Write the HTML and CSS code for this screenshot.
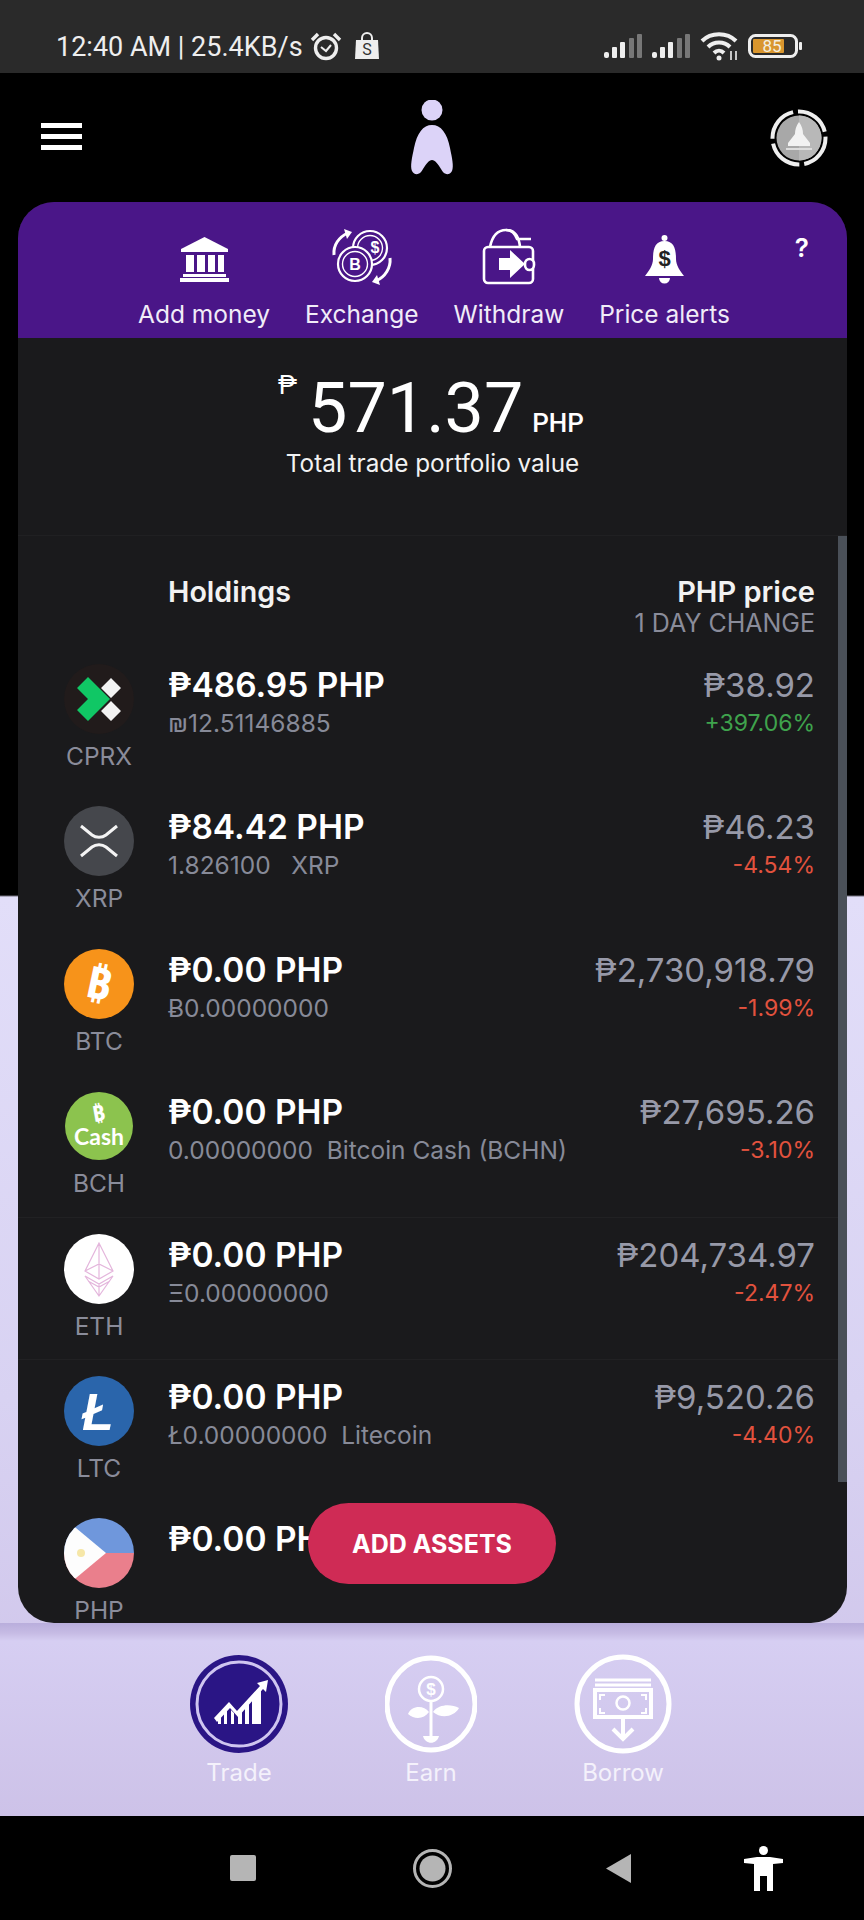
FILE: index.html
```html
<!DOCTYPE html>
<html lang="en">
<head>
<meta charset="utf-8">
<title>Trade</title>
<link rel="stylesheet" href="styles.css">
</head>
<body>
<div class="phone">
  <div class="status">
    <span class="status-text">12:40 AM | 25.4KB/s</span>
    <svg class="st-alarm" width="32" height="30" viewBox="0 0 32 30" fill="none" stroke="#eee"><circle cx="16" cy="17" r="10.5" stroke-width="3.4"/><path d="M11 16l5 4 5-6" stroke-width="2"/><path d="M2 9l6-6M30 9l-6-6" stroke-width="3.4"/></svg>
    <svg class="st-bag" width="26" height="27" viewBox="0 0 26 27"><path d="M8 9V6a5 5 0 0 1 10 0v3" fill="none" stroke="#eee" stroke-width="2"/><path d="M2 8h22l1 19H1z" fill="#eee"/><text x="13" y="23" class="bag-s">S</text></svg>
    <div class="status-right">
      <svg width="39" height="24" viewBox="0 0 39 24"><g fill="#eee"><rect x="0" y="18" width="5" height="6" rx="2"/><rect x="8" y="13" width="5" height="11" rx="1"/><rect x="16" y="8" width="5" height="16" rx="1"/></g><g fill="#777"><rect x="25" y="4" width="5" height="20" rx="1"/><rect x="33" y="0" width="5" height="24" rx="1"/></g></svg>
      <svg width="39" height="24" viewBox="0 0 39 24"><g fill="#eee"><rect x="0" y="18" width="5" height="6" rx="2"/><rect x="8" y="13" width="5" height="11" rx="1"/><rect x="16" y="8" width="5" height="16" rx="1"/></g><g fill="#777"><rect x="25" y="4" width="5" height="20" rx="1"/><rect x="33" y="0" width="5" height="24" rx="1"/></g></svg>
      <svg class="st-wifi" width="39" height="30" viewBox="0 0 39 30" fill="none" stroke="#eee" stroke-width="4"><path d="M2 10C11 1 27 1 36 10"/><path d="M8 16c6-6 16-6 22 0"/><path d="M14 22c3-3 7-3 10 0"/><circle cx="19" cy="27" r="2.5" fill="#eee" stroke="none"/><path d="M31 20v9M36 20v9" stroke-width="1.6"/></svg>
      <svg width="55" height="24" viewBox="0 0 55 24"><rect x="1.5" y="1.5" width="47" height="21" rx="6" fill="#2a2a2a" stroke="#eee" stroke-width="3"/><rect x="5" y="5" width="31" height="14" rx="1" fill="#d9962e"/><rect x="51" y="8" width="3" height="8" rx="1" fill="#eee"/><text x="24" y="18" class="batt">85</text></svg>
    </div>
  </div>

  <header class="topbar">
    <div class="burger"><i></i><i></i><i></i></div>
    <svg class="logo" width="44" height="76" viewBox="0 0 44 76" fill="#dcd3f8"><ellipse cx="22" cy="10" rx="10.500" ry="10.500"/><path d="M22 25C13 25 7 33 4 48 2 58 0 66 2 71c3 5 8 4 11-2 3-5 6-9 9-9s6 4 9 9c3 6 8 7 11 2 2-5 0-13-2-23-3-15-9-23-18-23z"/></svg>
    <svg class="avatar" width="58" height="58" viewBox="0 0 58 58"><circle cx="29" cy="29" r="22.500" fill="#a8a8a8"/><path d="M29 6.500a22.500 22.500 0 0 1 0 45z" fill="#b8b8b8"/><circle cx="29" cy="29" r="26.500" fill="none" stroke="#eee" stroke-width="4" stroke-dasharray="36 5"/><path d="M29 13c3 4 4 8 4 12l7 9v3H18v-3l7-9c0-4 1-8 4-12z" fill="#f2f2f2"/><rect x="16" y="39" width="26" height="2" fill="#ddd"/></svg>
  </header>

  <main class="card">
    <section class="actions">
      <div class="action">
        <svg width="49" height="58" viewBox="0 -9 49 58" fill="#fff"><path d="M24.500 0L48 12v3H1v-3z"/><path d="M6 18h8v17H6zM17 18h8v17h-8zM28 18h7v17h-7zM38 18h6v17h-6z"/><path d="M3 37h43v3H3zM0 41h49v4H0z"/></svg>
        <span>Add money</span>
      </div>
      <div class="action">
        <svg width="62" height="58" viewBox="0 0 62 58" fill="none" stroke="#fff" stroke-width="2.200"><circle cx="39" cy="20" r="17"/><circle cx="39" cy="20" r="12.500" stroke-width="1.400"/><circle cx="24" cy="36" r="17" fill="#4a1688"/><circle cx="24" cy="36" r="12.500" stroke-width="1.400"/><text x="24" y="42" class="coin">B</text><text x="44" y="25" class="coin">$</text><path d="M3 27C2 17 8 9 17 5" stroke-width="3"/><path d="M13 1l8 3-5 7z" fill="#fff" stroke="none"/><path d="M59 30c1 10-5 19-14 23" stroke-width="3"/><path d="M49 57l-8-3 5-7z" fill="#fff" stroke="none"/></svg>
        <span>Exchange</span>
      </div>
      <div class="action">
        <svg width="54" height="58" viewBox="0 -1 54 58" fill="none" stroke="#fff" stroke-width="2.600"><rect x="2" y="18" width="49" height="36" rx="4"/><path d="M8 18C10 8 15 1 24 1c9 0 13 7 14 17"/><path d="M24 1c7 0 9 5 11 9h14" /><path d="M17 30h11v-8l15 14-15 14v-8H17z" fill="#fff" stroke="none" transform="translate(0 -1)"/><rect x="43" y="30" width="9" height="11" rx="5" fill="#4a1688"/></svg>
        <span>Withdraw</span>
      </div>
      <div class="action">
        <svg width="39" height="58" viewBox="0 -7 39 58" fill="#fff"><circle cx="19.500" cy="3" r="3"/><path d="M19.500 6C29 6 31 14 31 24c0 6 4 12 8 17H0c4-5 8-11 8-17C8 14 10 6 19.500 6z"/><path d="M14 43h11a5.500 5.500 0 0 1-11 0z"/><text x="19.500" y="31" class="bell">$</text></svg>
        <span>Price alerts</span>
      </div>
      <span class="help">?</span>
    </section>

    <section class="summary">
      <div class="total"><span class="total-sym">₱</span><span class="total-num">571.37</span><span class="total-cur">PHP</span></div>
      <p class="total-label">Total trade portfolio value</p>
    </section>

    <section class="holdings">
      <div class="list-head">
        <span class="lh-left">Holdings</span>
        <div class="lh-right"><b>PHP price</b><span>1 DAY CHANGE</span></div>
      </div>

      <div class="row">
        <div class="coin-col">
          <svg class="ico" viewBox="0 0 70 70"><circle cx="35" cy="35" r="35" fill="#211b1b"/><path d="M13 24l11-11 22 22-22 22-11-11 11-11z" fill="#10c765"/><path d="M47 14l10 10-10 10-10-10zM47 37l10 10-10 10-10-10z" fill="#f2f2f2"/></svg>
          <span>CPRX</span>
        </div>
        <div class="hold"><b>₱486.95 PHP</b><span>₪12.51146885</span></div>
        <div class="price"><b>₱38.92</b><span class="up">+397.06%</span></div>
      </div>

      <div class="row">
        <div class="coin-col">
          <svg class="ico" viewBox="0 0 70 70"><circle cx="35" cy="35" r="35" fill="#45474c"/><path d="M17 20l11 9c4 3 10 3 14 0l11-9M17 50l11-9c4-3 10-3 14 0l11 9" fill="none" stroke="#f4f4f4" stroke-width="3"/></svg>
          <span>XRP</span>
        </div>
        <div class="hold"><b>₱84.42 PHP</b><span>1.826100 &nbsp; XRP</span></div>
        <div class="price"><b>₱46.23</b><span class="down">-4.54%</span></div>
      </div>

      <div class="row">
        <div class="coin-col">
          <svg class="ico" viewBox="0 0 70 70"><circle cx="35" cy="35" r="35" fill="#f7931a"/><text x="35" y="50" class="btc" transform="rotate(12 35 35)">₿</text></svg>
          <span>BTC</span>
        </div>
        <div class="hold"><b>₱0.00 PHP</b><span>Ƀ0.00000000</span></div>
        <div class="price"><b>₱2,730,918.79</b><span class="down">-1.99%</span></div>
      </div>

      <div class="row">
        <div class="coin-col">
          <svg class="ico" viewBox="0 0 70 70"><circle cx="35" cy="35" r="34" fill="#8cc34e"/><text x="35" y="30" class="bch-b" transform="rotate(-10 35 25)">₿</text><text x="35" y="54" class="bch-c">Cash</text></svg>
          <span>BCH</span>
        </div>
        <div class="hold"><b>₱0.00 PHP</b><span>0.00000000 &nbsp;Bitcoin Cash (BCHN)</span></div>
        <div class="price"><b>₱27,695.26</b><span class="down">-3.10%</span></div>
      </div>

      <div class="row row-line">
        <div class="coin-col">
          <svg class="ico" viewBox="0 0 70 70"><circle cx="35" cy="35" r="35" fill="#fff"/><g fill="none" stroke="#e4b6dc" stroke-width="1.200"><path d="M35 9L21 37l14 8 14-8zM35 9v36M21 37l14-7 14 7M21 42l14 20 14-20-14 8zM24 47l11 6 11-6M35 50v12"/></g></svg>
          <span>ETH</span>
        </div>
        <div class="hold"><b>₱0.00 PHP</b><span>Ξ0.00000000</span></div>
        <div class="price"><b>₱204,734.97</b><span class="down">-2.47%</span></div>
      </div>

      <div class="row row-line">
        <div class="coin-col">
          <svg class="ico" viewBox="0 0 70 70"><circle cx="35" cy="35" r="35" fill="#2a65ab"/><text x="34" y="54" class="ltc">Ł</text></svg>
          <span>LTC</span>
        </div>
        <div class="hold"><b>₱0.00 PHP</b><span>Ł0.00000000 &nbsp;Litecoin</span></div>
        <div class="price"><b>₱9,520.26</b><span class="down">-4.40%</span></div>
      </div>

      <div class="row">
        <div class="coin-col">
          <svg class="ico" viewBox="0 0 70 70"><defs><clipPath id="flag"><circle cx="35" cy="35" r="35"/></clipPath></defs><g clip-path="url(#flag)"><rect width="70" height="35" fill="#6f97dc"/><rect y="35" width="70" height="35" fill="#ea7f8c"/><path d="M0 0l42 35L0 70z" fill="#fdfdfd"/><circle cx="17" cy="35" r="4" fill="#f6e7a8"/></g></svg>
          <span>PHP</span>
        </div>
        <div class="hold"><b>₱0.00 PHP</b></div>
      </div>

      <div class="scrollbar"></div>
      <button class="fab" type="button">ADD ASSETS</button>
    </section>
  </main>

  <nav class="tabs">
    <div class="tab">
      <svg width="98" height="100" viewBox="0 0 98 100"><circle cx="49" cy="50" r="49" fill="#2a1585"/><circle cx="49" cy="50" r="42" fill="none" stroke="#cfc5f0" stroke-width="3"/><g fill="#fff"><path d="M24 64l15-16 8 9 23-25-3-3 11-3-2 12-3-3-25 28-8-9-13 14z"/><path d="M28 70V62l3-3v11zM34 70V56l3-3v17zM41 70V56l3 3v11zM48 70V60l4-4v14zM55 70V50l4-4v24zM62 70V42l9-10v38z"/></g></svg>
      <span>Trade</span>
    </div>
    <div class="tab">
      <svg width="92" height="100" viewBox="0 0 92 100" fill="none" stroke="#fff"><ellipse cx="46" cy="50" rx="44" ry="46" stroke-width="5"/><circle cx="46" cy="35" r="12" stroke-width="2.500"/><text x="46" y="41" class="earn">$</text><path d="M46 47v36" stroke-width="3"/><path d="M44 58C38 50 26 52 23 60c7 6 16 5 21-2zM48 58c6-8 18-8 26-4-5 9-18 11-26 4z" fill="#fff" stroke="none"/><path d="M38 82c2 9 14 9 16 0z" fill="#fff" stroke="none"/></svg>
      <span>Earn</span>
    </div>
    <div class="tab">
      <svg width="98" height="100" viewBox="0 0 98 100" fill="none" stroke="#fff"><ellipse cx="49" cy="50" rx="46" ry="47" stroke-width="5"/><path d="M21 26h56M21 31h56" stroke-width="3"/><rect x="21" y="36" width="56" height="27" stroke-width="4"/><circle cx="49" cy="49" r="6.500" stroke-width="2.500"/><path d="M26 46v-5h5M72 46v-5h-5M26 54v5h5M72 54v5h-5" stroke-width="2"/><path d="M49 64v20" stroke-width="4"/><path d="M39 75l10 10 10-10" stroke-width="4"/></svg>
      <span>Borrow</span>
    </div>
  </nav>

  <footer class="navbar">
    <div class="nb-square"></div>
    <svg class="nb-home" width="39" height="39" viewBox="0 0 39 39"><circle cx="19.500" cy="19.500" r="18" fill="none" stroke="#b5b5b5" stroke-width="3"/><circle cx="19.500" cy="19.500" r="13" fill="#b5b5b5"/></svg>
    <svg class="nb-back" width="25" height="29" viewBox="0 0 25 29"><path d="M25 0v29L0 14.500z" fill="#b5b5b5"/></svg>
    <svg class="nb-a11y" width="39" height="45" viewBox="0 0 39 45" fill="#fff"><ellipse cx="19.500" cy="4.500" rx="4.500" ry="4.500"/><path d="M0 13l13-2h13l13 2v4l-10 1v27h-6V30h-7v15h-6V18L0 17z"/></svg>
  </footer>
</div>
</body>
</html>
```
FILE: styles.css
```css
* { box-sizing: border-box; }
html, body { margin: 0; padding: 0; }
body { font-family: "Inter", "Noto Sans", "DejaVu Sans", sans-serif; color: #fff; }

.phone {
  width: 864px;
  height: 1920px;
  display: flex;
  flex-direction: column;
  overflow: hidden;
  background: linear-gradient(#000 0, #000 895px, #e2def9 897px, #d8d2f2 1400px, #cdc2e8 1816px);
}

/* status bar */
.status {
  height: 73px;
  background: #2a2a2a;
  display: flex;
  align-items: center;
  padding: 21px 61px 0 56px;
  flex: none;
}
.status-text { font: 400 27px "Roboto", sans-serif; color: #eee; white-space: nowrap; }
.st-alarm { margin-left: 7px; margin-top: -3px; }
.st-bag { margin-left: 12px; margin-top: -3px; }
.status-right { margin-left: auto; display: flex; align-items: center; gap: 9px; margin-top: -2px; }
.bag-s { font: 400 16px "Roboto", sans-serif; fill: #333; text-anchor: middle; }
.batt { font: 400 17px "Roboto", sans-serif; fill: #f3efe0; text-anchor: middle; }

/* top bar */
.topbar {
  height: 129px;
  flex: none;
  position: relative;
  display: flex;
  align-items: center;
  justify-content: space-between;
  padding: 0 36px 0 41px;
}
.burger { width: 41px; display: flex; flex-direction: column; gap: 6px; margin-top: -2px; }
.burger i { display: block; height: 5px; background: #fff; }
.logo { position: absolute; left: 410px; top: 27px; }

/* card */
.card {
  flex: none;
  height: 1421px;
  margin: 0 17px 0 18px;
  border-radius: 36px;
  overflow: hidden;
  background: #1a1a1c;
  display: flex;
  flex-direction: column;
}
.actions {
  height: 136px;
  flex: none;
  background: #4a1688;
  display: flex;
  align-items: flex-end;
  gap: 35px;
  padding: 0 38px 9px 120px;
}
.action { display: flex; flex-direction: column; align-items: center; }
.action svg { display: block; margin-bottom: 13px; }
.action span { font-size: 24.5px; line-height: 30px; color: #f1ecf8; white-space: nowrap; }
.help { margin-left: auto; align-self: flex-start; margin-top: 31px; font-size: 26px; font-weight: 600; line-height: 30px; }

.summary { height: 198px; flex: none; text-align: center; border-bottom: 1px solid #202022; padding-top: 28px; }
.total { display: flex; justify-content: center; align-items: baseline; padding-right: 3px; }
.total-sym { font: 400 26px "Roboto", sans-serif; align-self: flex-start; margin-top: 4px; margin-right: 11px; }
.total-num { font: 400 70px/84px "Roboto", sans-serif; }
.total-cur { font: 500 26px "Roboto", sans-serif; margin-left: 9px; }
.total-label { margin: -2px 0 0; font-size: 24.3px; line-height: 30px; color: #f2f2f2; }

.holdings { flex: 1; min-height: 0; position: relative; overflow: hidden; }
.list-head {
  height: 112px;
  display: flex;
  justify-content: space-between;
  padding: 39px 32px 0 150px;
}
.lh-left { font-size: 28.7px; font-weight: 600; line-height: 34px; color: #f2f2f2; }
.lh-right { display: flex; flex-direction: column; align-items: flex-end; }
.lh-right b { font-size: 29px; line-height: 34px; font-weight: 600; color: #f2f2f2; }
.lh-right span { font-size: 25px; line-height: 28px; color: #8a8c9a; }

.row {
  height: 142.3px;
  flex: none;
  display: flex;
  padding: 16px 32px 0 36px;
}
.row-line { border-top: 1px solid #212123; }
.coin-col { width: 90px; margin-right: 24px; display: flex; flex-direction: column; align-items: center; flex: none; }
.ico { width: 70px; height: 70px; display: block; }
.coin-col span { font-size: 24.5px; line-height: 28px; margin-top: 8px; color: #8a8c9a; }
.hold { display: flex; flex-direction: column; flex: 1; min-width: 0; padding-top: 1px; }
.hold b { font-size: 33.5px; line-height: 40px; font-weight: 600; color: #fff; white-space: nowrap; }
.hold span { font-size: 24.5px; line-height: 30px; margin-top: 3px; color: #878a98; white-space: nowrap; }
.price { display: flex; flex-direction: column; align-items: flex-end; padding-top: 1px; }
.price b { font-size: 33px; line-height: 40px; font-weight: 400; color: #9799a8; white-space: nowrap; }
.price span { font-size: 23px; line-height: 30px; margin-top: 3px; }
.up { color: #3fa34d; }
.down { color: #e2523e; }

.scrollbar { position: absolute; top: 0; right: 0; width: 9px; height: 946px; background: #4a5058; }
.fab {
  position: absolute;
  left: 290px;
  bottom: 39px;
  width: 248px;
  height: 81px;
  border: 0;
  border-radius: 41px;
  background: #cf2b55;
  color: #fff;
  font: 700 25px "Inter", sans-serif;
}

/* SVG text */
.coin { font: 700 16px "Liberation Sans", sans-serif; fill: #fff; stroke: none; text-anchor: middle; }
.bell { font: 700 22px "Liberation Sans", sans-serif; fill: #222; text-anchor: middle; }
.btc { font: 700 44px "Noto Sans", "DejaVu Sans", sans-serif; fill: #fff; text-anchor: middle; }
.bch-b { font: 700 22px "Noto Sans", "DejaVu Sans", sans-serif; fill: #fff; text-anchor: middle; }
.bch-c { font: 700 23px "Lato", sans-serif; fill: #fff; text-anchor: middle; }
.ltc { font: italic 700 52px "Liberation Sans", sans-serif; fill: #fff; text-anchor: middle; }
.earn { font: 700 17px "Liberation Sans", sans-serif; fill: #fff; stroke: none; text-anchor: middle; }

/* bottom tabs */
.tabs {
  flex: 1;
  min-height: 0;
  display: grid;
  grid-template-columns: repeat(3, 192px);
  justify-content: center;
  padding: 31px 2px 0 0;
  background: linear-gradient(#b9aedc 0, #c6bbe4 10px, #d6cef2 18px, #cdc2e8 100%);
}
.tab { display: flex; flex-direction: column; align-items: center; }
.tab svg { display: block; }
.tab span { font-size: 24px; line-height: 28px; margin-top: 5px; color: #f4f1fb; }

/* system nav */
.navbar {
  height: 104px;
  flex: none;
  background: #000;
  display: flex;
  align-items: center;
  padding-left: 230px;
}
.nb-square { width: 26px; height: 26px; border-radius: 2px; background: #b5b5b5; }
.nb-home { margin-left: 157px; }
.nb-back { margin-left: 154px; }
.nb-a11y { margin-left: 113px; }
```
